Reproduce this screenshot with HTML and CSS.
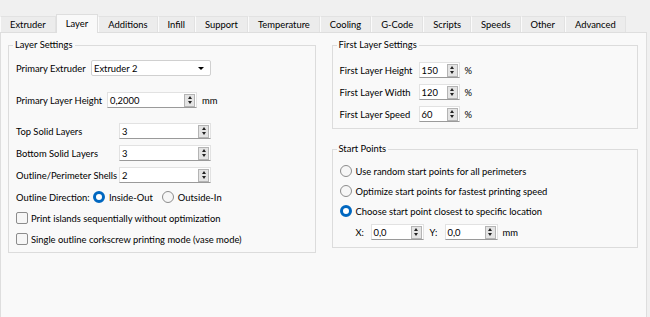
FILE: index.html
```html
<!DOCTYPE html>
<html>
<head>
<meta charset="utf-8">
<link rel="stylesheet" href="styles.css">
</head>
<body>
<div class="tabbar">
  <div class="tab">Extruder</div>
  <div class="tab active">Layer</div>
  <div class="tab">Additions</div>
  <div class="tab">Infill</div>
  <div class="tab">Support</div>
  <div class="tab">Temperature</div>
  <div class="tab">Cooling</div>
  <div class="tab">G-Code</div>
  <div class="tab">Scripts</div>
  <div class="tab">Speeds</div>
  <div class="tab">Other</div>
  <div class="tab">Advanced</div>
</div>
<div class="pane">
  <div class="col col-left">
    <fieldset class="group group-layer">
      <legend>Layer Settings</legend>
      <div class="row">
        <span class="lbl w-extruder">Primary Extruder</span>
        <div class="combo"><span class="val">Extruder 2</span><span class="caret"></span></div>
      </div>
      <div class="row mt16">
        <span class="lbl w-height">Primary Layer Height</span>
        <div class="spin w90"><span class="val">0,2000</span><span class="btns"><i class="up"></i><i class="dn"></i></span></div>
        <span class="unit">mm</span>
      </div>
      <div class="row mt15">
        <span class="lbl w-solid">Top Solid Layers</span>
        <div class="spin w92"><span class="val">3</span><span class="btns"><i class="up"></i><i class="dn"></i></span></div>
      </div>
      <div class="row mt6">
        <span class="lbl w-solid">Bottom Solid Layers</span>
        <div class="spin w92"><span class="val">3</span><span class="btns"><i class="up"></i><i class="dn"></i></span></div>
      </div>
      <div class="row mt6">
        <span class="lbl w-solid">Outline/Perimeter Shells</span>
        <div class="spin w92"><span class="val">2</span><span class="btns"><i class="up"></i><i class="dn"></i></span></div>
      </div>
      <div class="row mt6">
        <span class="lbl w-dir">Outline Direction:</span>
        <span class="radio checked"></span><span class="opt">Inside-Out</span>
        <span class="radio ml9"></span><span class="opt">Outside-In</span>
      </div>
      <div class="row mt5">
        <span class="check"></span><span class="opt">Print islands sequentially without optimization</span>
      </div>
      <div class="row mt5">
        <span class="check"></span><span class="opt">Single outline corkscrew printing mode (vase mode)</span>
      </div>
    </fieldset>
  </div>
  <div class="col col-right">
    <fieldset class="group group-first">
      <legend>First Layer Settings</legend>
      <div class="row">
        <span class="lbl w-first">First Layer Height</span>
        <div class="spin w41"><span class="val">150</span><span class="btns"><i class="up"></i><i class="dn"></i></span></div>
        <span class="unit">%</span>
      </div>
      <div class="row mt6">
        <span class="lbl w-first">First Layer Width</span>
        <div class="spin w41"><span class="val">120</span><span class="btns"><i class="up"></i><i class="dn"></i></span></div>
        <span class="unit">%</span>
      </div>
      <div class="row mt6">
        <span class="lbl w-first">First Layer Speed</span>
        <div class="spin w41"><span class="val">60</span><span class="btns"><i class="up"></i><i class="dn"></i></span></div>
        <span class="unit">%</span>
      </div>
    </fieldset>
    <fieldset class="group group-start">
      <legend>Start Points</legend>
      <div class="row">
        <span class="radio"></span><span class="opt">Use random start points for all perimeters</span>
      </div>
      <div class="row mt4">
        <span class="radio"></span><span class="opt">Optimize start points for fastest printing speed</span>
      </div>
      <div class="row mt4">
        <span class="radio checked"></span><span class="opt">Choose start point closest to specific location</span>
      </div>
      <div class="row mt5 indent">
        <span class="lbl w-xy">X:</span>
        <div class="spin w53"><span class="val">0,0</span><span class="btns"><i class="up"></i><i class="dn"></i></span></div>
        <span class="lbl w-y">Y:</span>
        <div class="spin w53"><span class="val">0,0</span><span class="btns"><i class="up"></i><i class="dn"></i></span></div>
        <span class="unit">mm</span>
      </div>
    </fieldset>
  </div>
</div>
</body>
</html>
```
FILE: styles.css
```css
html, body {
  margin: 0;
  padding: 0;
  overflow: hidden;
  background: #f0f0f0;
}
body {
  width: 650px;
  height: 317px;
  font-family: Lato, "Liberation Sans", sans-serif;
  font-size: 9.4px;
  color: #000;
}
.tabbar {
  display: flex;
  align-items: flex-end;
  height: 32px;
  padding-top: 14px;
  box-sizing: border-box;
}
.tab {
  height: 16px;
  line-height: 15px;
  padding: 0 9px;
  background: #ececec;
  border: 1px solid #e2e2e2;
  border-bottom: none;
  border-left-color: #fbfbfb;
  box-sizing: border-box;
  white-space: nowrap;
}
.tab.active {
  height: 19px;
  line-height: 17px;
  background: #f9f9f9;
  border-color: #dedede;
  margin-bottom: -1px;
  position: relative;
  z-index: 1;
}
.pane {
  display: flex;
  gap: 16px;
  width: 647px;
  height: 292px;
  box-sizing: border-box;
  background: #f9f9f9;
  border: 1px solid #dedede;
  padding: 6px 8px 0 7px;
}
.col {
  display: flex;
  flex-direction: column;
}
.col-left { width: 308px; }
.col-right { width: 307px; }
.group {
  margin: 0;
  min-width: 0;
  border: 1px solid #dcdcdc;
  padding: 9px 7px 5px 7px;
  display: flex;
  flex-direction: column;
}
.group legend {
  padding: 0 2px;
  margin-left: -3px;
  line-height: 12px;
  font-size: 9.4px;
}
.group-first { padding-top: 11px; padding-bottom: 6px; }
.group-start { margin-top: 14px; padding-top: 8px; padding-bottom: 7px; }
.row {
  display: flex;
  align-items: center;
  height: 16px;
  white-space: nowrap;
}
.mt4 { margin-top: 4px; }
.mt5 { margin-top: 5px; }
.mt6 { margin-top: 6px; }
.mt15 { margin-top: 15px; }
.mt16 { margin-top: 16px; }
.lbl { flex: none; }
.w-extruder { width: 75px; }
.w-height { width: 91px; }
.w-solid { width: 103px; }
.w-dir { width: 77px; }
.w-first { width: 79px; }
.w-xy { width: 15px; }
.w-y { width: 15px; margin-left: 6px; }
.indent { padding-left: 16px; }
.unit { margin-left: 5px; }
.combo {
  width: 120px;
  height: 16px;
  box-sizing: border-box;
  background: #fff;
  border: 1px solid #d0d0d0;
  border-radius: 2px;
  display: flex;
  align-items: center;
  padding: 0 6px 0 2px;
}
.combo .val { flex: 1; }
.caret {
  width: 0;
  height: 0;
  border-left: 3px solid transparent;
  border-right: 3px solid transparent;
  border-top: 3px solid #000;
}
.spin {
  height: 16px;
  box-sizing: border-box;
  background: #fff;
  border: 1px solid #e2e2e2;
  border-bottom-color: #9a9a9a;
  display: flex;
  align-items: center;
  padding: 0 0 0 2px;
}
.spin .val { flex: 1; }
.w90 { width: 90px; }
.w92 { width: 92px; }
.w41 { width: 41px; }
.w53 { width: 53px; }
.btns {
  width: 11px;
  height: 13px;
  box-sizing: border-box;
  margin-right: 1px;
  background: #e4e4e4;
  border: 1px solid #b4b4b4;
  display: flex;
  flex-direction: column;
  align-items: center;
  justify-content: center;
  gap: 2px;
}
.btns i {
  display: block;
  width: 0;
  height: 0;
  border-left: 2.5px solid transparent;
  border-right: 2.5px solid transparent;
}
.btns .up { border-bottom: 3px solid #222; }
.btns .dn { border-top: 3px solid #222; }
.radio {
  flex: none;
  width: 12px;
  height: 12px;
  box-sizing: border-box;
  border-radius: 50%;
  border: 1px solid #8c8c8c;
  background: #f6f6f6;
  margin-right: 4px;
}
.radio.checked {
  border: 3.5px solid #0067c0;
  background: #fff;
}
.ml9 { margin-left: 9px; }
.check {
  flex: none;
  width: 12px;
  height: 12px;
  box-sizing: border-box;
  border: 1px solid #8c8c8c;
  border-radius: 2px;
  background: #f6f6f6;
  margin-right: 3px;
}
```
